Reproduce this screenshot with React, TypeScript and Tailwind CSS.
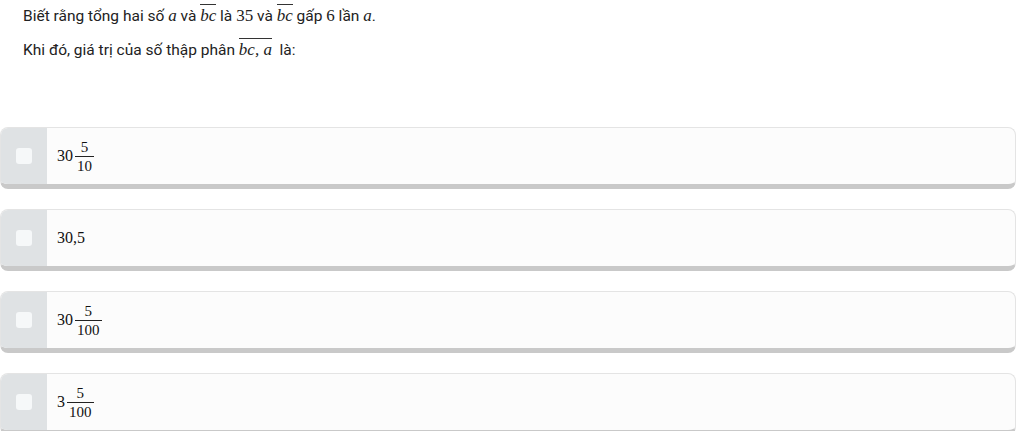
import React from 'react';

const serif = "font-['Liberation_Serif','DejaVu_Serif',serif]";

const Frac: React.FC<{ num: string; den: string }> = ({ num, den }) => (
  <span className="inline-flex flex-col items-center align-middle ml-[2px] text-[15px] leading-[16px]">
    <span className="px-[1px] pb-[1px]">{num}</span>
    <span className="border-t border-[#222] px-[2px] pt-[1px] w-full text-center">{den}</span>
  </span>
);

const Over: React.FC<{ children: React.ReactNode }> = ({ children }) => (
  <span className={`${serif} italic border-t border-[#333] pt-[1px] text-[17px]`}>{children}</span>
);

interface OptionProps {
  children: React.ReactNode;
}

const Option: React.FC<OptionProps> = ({ children }) => (
  <div className="flex h-[62px] w-[1016px] shrink-0 rounded-[8px] border border-[#e4e4e4] border-b-[5px] border-b-[#c9c9c9] bg-[#fcfcfc] overflow-hidden">
    <div className="w-[46px] shrink-0 bg-[#dfe2e4] flex items-center justify-center">
      <div className="w-[16px] h-[16px] rounded-[3px] bg-[#f6f8f9]" />
    </div>
    <div className={`flex items-center pl-[10px] text-[16px] text-[#111] ${serif}`}>{children}</div>
  </div>
);

export default function App() {
  return (
    <div className="w-[1024px] h-[431px] overflow-hidden bg-white font-['Roboto','Liberation_Sans',sans-serif] text-[15.5px] text-[#222]">
      <div className="pl-[23px] pt-[5px]">
        <p className="leading-[22px]">
          Biết rằng tổng hai số <span className={`${serif} italic text-[17px]`}>a</span> và <Over>bc</Over> là{' '}
          <span className={`${serif} text-[17px]`}>35</span> và <Over>bc</Over> gấp{' '}
          <span className={`${serif} text-[17px]`}>6</span> lần <span className={`${serif} italic text-[17px]`}>a</span>.
        </p>
        <p className="leading-[22px] mt-[12px]">
          Khi đó, giá trị của số thập phân <Over>bc, a</Over>&nbsp; là:
        </p>
      </div>
      <div className="flex flex-col gap-[20px] mt-[66px]">
        <Option>
          30<Frac num="5" den="10" />
        </Option>
        <Option>30,5</Option>
        <Option>
          30<Frac num="5" den="100" />
        </Option>
        <Option>
          3<Frac num="5" den="100" />
        </Option>
      </div>
    </div>
  );
}
